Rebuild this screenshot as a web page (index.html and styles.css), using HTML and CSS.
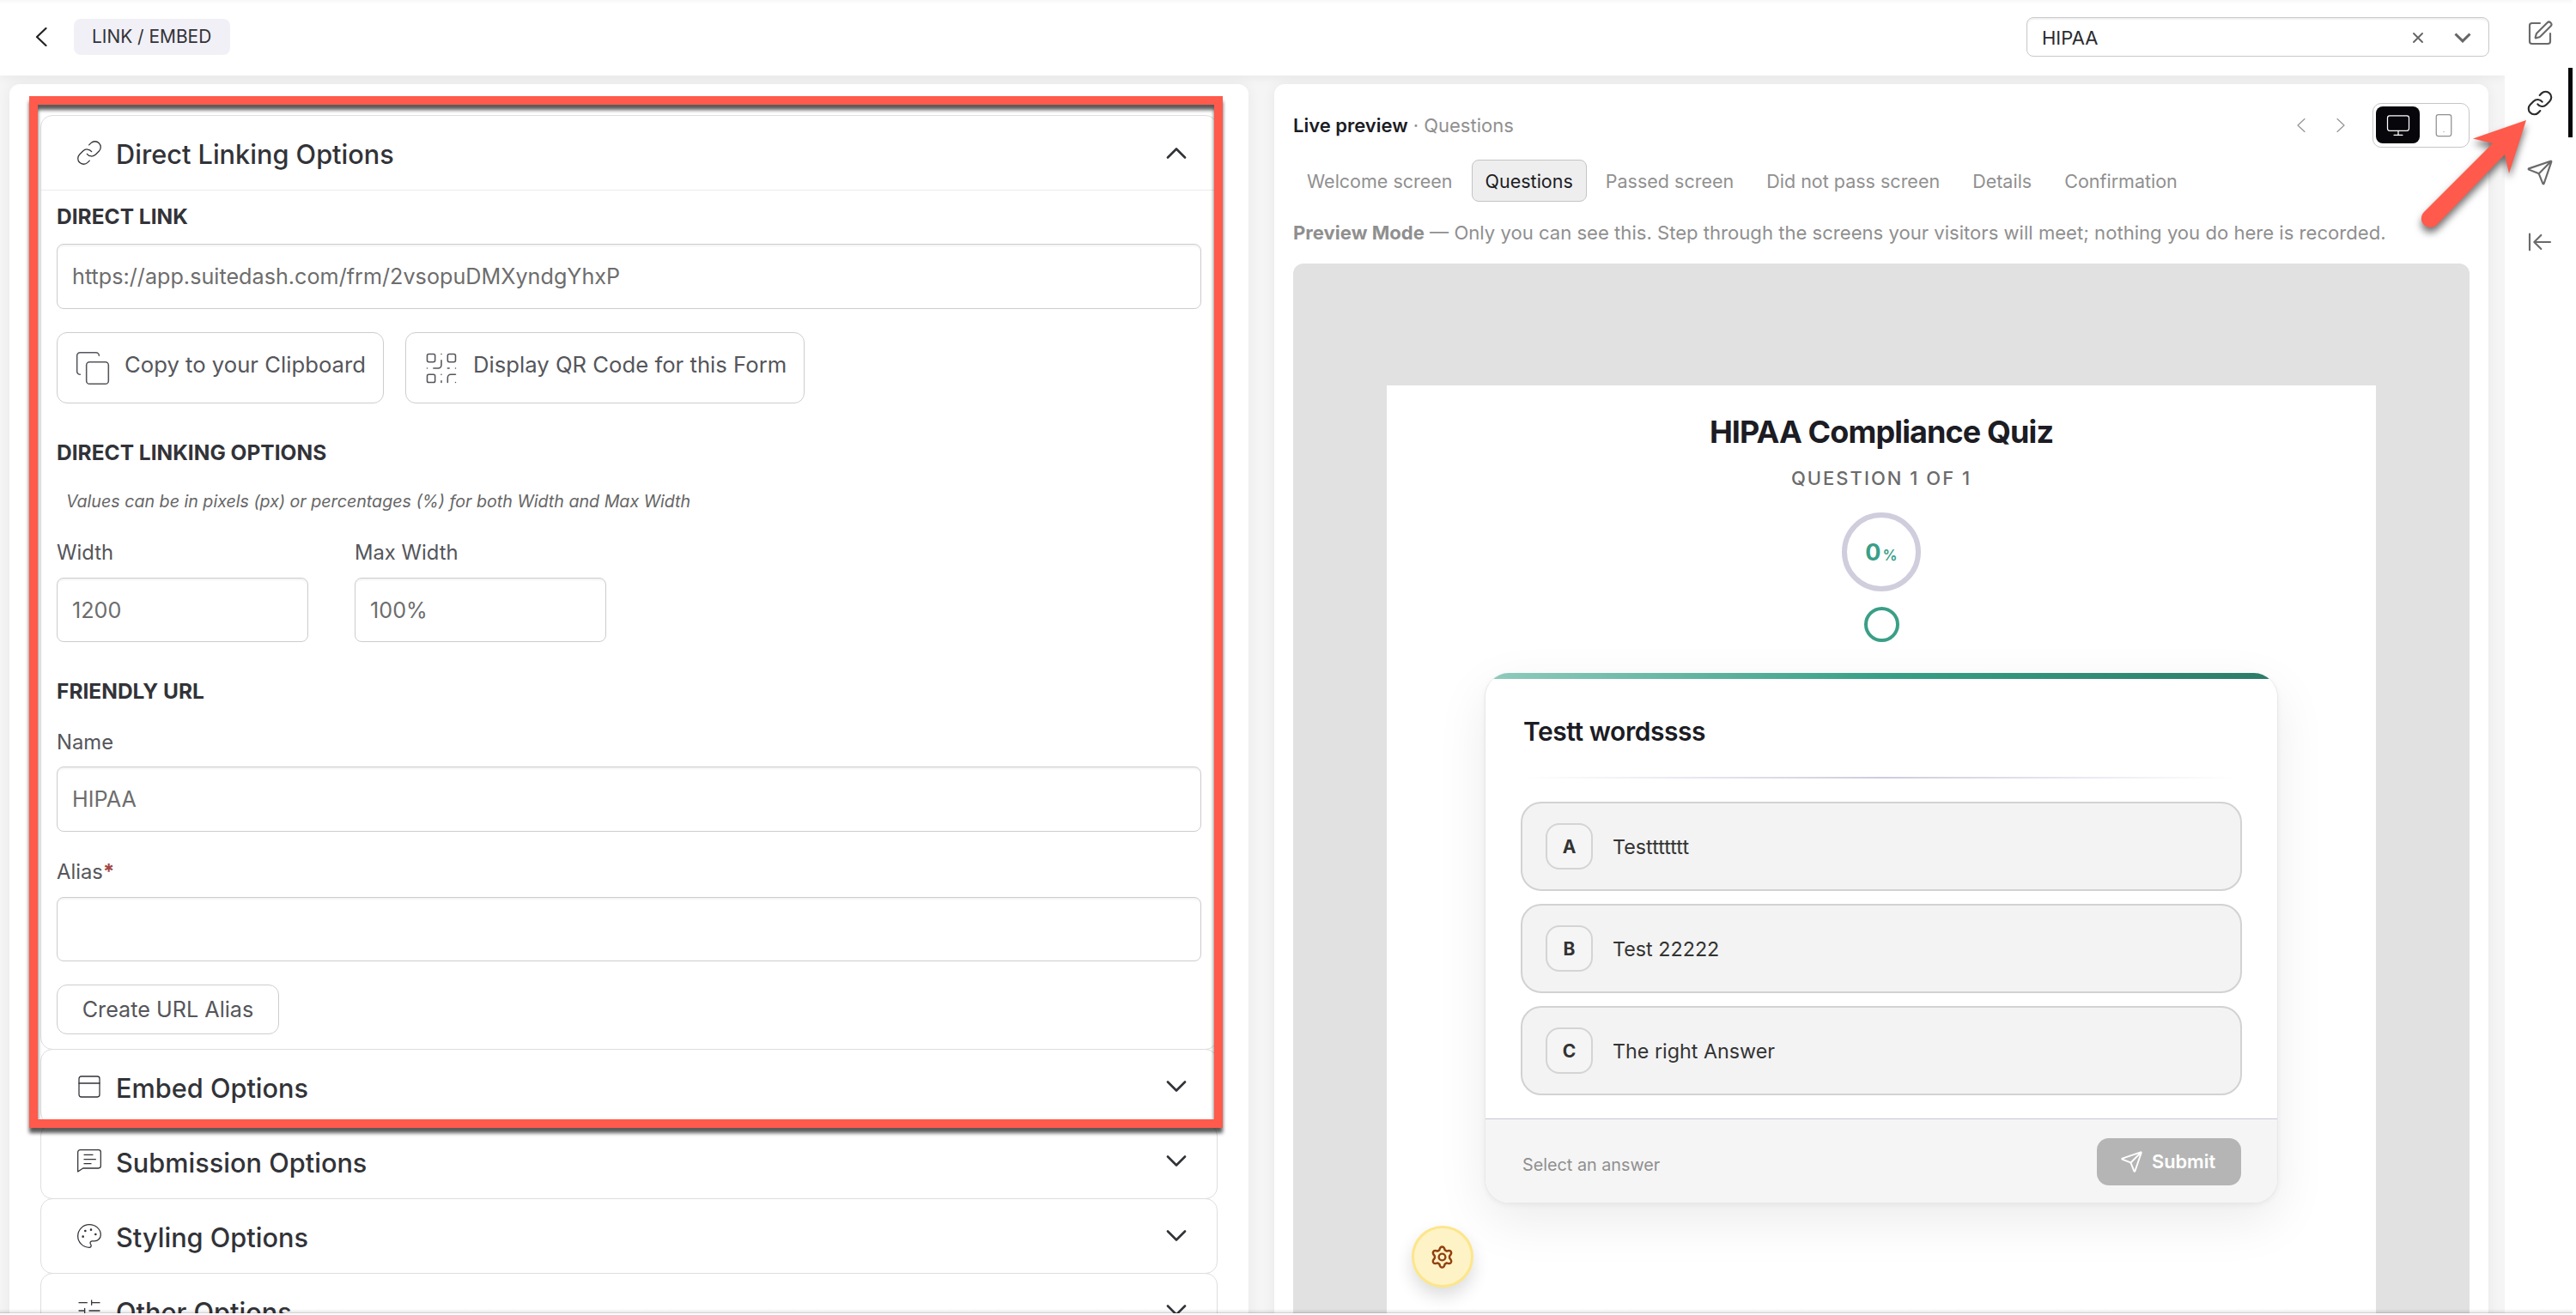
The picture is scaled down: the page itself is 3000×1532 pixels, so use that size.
FILE: index.html
```
<!DOCTYPE html>
<html lang="en">

<head>
    <meta charset="UTF-8">
    <meta name="viewport" content="width=device-width, initial-scale=1.0">
    <title>Link / Embed</title>
    <link rel="stylesheet" href="styles.css">
</head>

<body>
    <div class="app">
        <div class="main">
            <header class="topbar">
                <svg class="back" viewBox="0 0 14 22"><path d="M12.5 1 2 11l10.5 10"/></svg>
                <span class="chip">LINK / EMBED</span>
                <div class="form-select">
                    <span>HIPAA</span>
                    <svg class="clear" viewBox="0 0 12 12"><path d="M1 1l10 10M11 1 1 11"/></svg>
                    <svg class="caret" viewBox="0 0 20 12"><path d="M1.5 1.5 10 9.8l8.5-8.3"/></svg>
                </div>
            </header>

            <div class="panels">
                <section class="panel settings">
                    <div class="item">
                        <div class="item-head open">
                            <svg class="icon" viewBox="0 0 24 24"><path d="M10 13a5 5 0 0 0 7.54.54l3-3a5 5 0 0 0-7.07-7.07l-1.72 1.71"/><path d="M14 11a5 5 0 0 0-7.54-.54l-3 3a5 5 0 0 0 7.07 7.07l1.71-1.71"/></svg>
                            <h2>Direct Linking Options</h2>
                            <svg class="chevron up" viewBox="0 0 24 14"><path d="M2 1.5 12 11.5 22 1.5"/></svg>
                        </div>
                        <div class="item-body">
                            <h3>DIRECT LINK</h3>
                            <div class="input link">https://app.suitedash.com/frm/2vsopuDMXyndgYhxP</div>
                            <div class="buttons">
                                <div class="btn">
                                    <svg viewBox="0 0 24 24"><rect x="8" y="8" width="14" height="14" rx="2"/><path d="M4 16c-1.1 0-2-.9-2-2V4c0-1.1.9-2 2-2h10c1.1 0 2 .9 2 2"/></svg>
                                    <span>Copy to your Clipboard</span>
                                </div>
                                <div class="btn">
                                    <svg viewBox="0 0 24 24"><rect x="3" y="3" width="5" height="5" rx="1"/><rect x="16" y="3" width="5" height="5" rx="1"/><rect x="3" y="16" width="5" height="5" rx="1"/><path d="M21 16h-3a2 2 0 0 0-2 2v3M21 21v.01M12 7v3a2 2 0 0 1-2 2H7M3 12h.01M12 3h.01M12 16v.01M16 12h1M21 12v.01M12 21v-1"/></svg>
                                    <span>Display QR Code for this Form</span>
                                </div>
                            </div>

                            <h3 class="sizes-title">DIRECT LINKING OPTIONS</h3>
                            <p class="hint">Values can be in pixels (px) or percentages (%) for both Width and Max Width</p>
                            <div class="sizes">
                                <div class="field">
                                    <label>Width</label>
                                    <div class="input">1200</div>
                                </div>
                                <div class="field">
                                    <label>Max Width</label>
                                    <div class="input">100%</div>
                                </div>
                            </div>

                            <h3 class="friendly-title">FRIENDLY URL</h3>
                            <label class="name-label">Name</label>
                            <div class="input name">HIPAA</div>
                            <label class="alias-label">Alias<b>*</b></label>
                            <div class="input alias"></div>
                            <div class="btn small"><span>Create URL Alias</span></div>
                        </div>
                    </div>

                    <div class="item">
                        <div class="item-head">
                            <svg class="icon" viewBox="0 0 24 24"><rect x="3" y="3" width="18" height="18" rx="2"/><path d="M3 9h18"/></svg>
                            <h2>Embed Options</h2>
                            <svg class="chevron" viewBox="0 0 24 14"><path d="M2 1.5 12 11.5 22 1.5"/></svg>
                        </div>
                    </div>
                    <div class="item">
                        <div class="item-head">
                            <svg class="icon" viewBox="0 0 24 24"><path d="M22 16a2 2 0 0 1-2 2H6.5L2 21V4a2 2 0 0 1 2-2h16a2 2 0 0 1 2 2zM7.5 6.2H15M7.5 10.3h10M7.5 14h6"/></svg>
                            <h2>Submission Options</h2>
                            <svg class="chevron" viewBox="0 0 24 14"><path d="M2 1.5 12 11.5 22 1.5"/></svg>
                        </div>
                    </div>
                    <div class="item">
                        <div class="item-head">
                            <svg class="icon" viewBox="0 0 24 24"><g class="dots"><circle cx="13.5" cy="6.5" r=".5"/><circle cx="17.5" cy="10.5" r=".5"/><circle cx="8.5" cy="7.5" r=".5"/><circle cx="6.5" cy="12.5" r=".5"/></g><path d="M12 2C6.5 2 2 6.5 2 12s4.5 10 10 10c.926 0 1.648-.746 1.648-1.688 0-.437-.18-.835-.437-1.125-.29-.289-.438-.652-.438-1.125a1.64 1.64 0 0 1 1.668-1.668h1.996c3.051 0 5.555-2.503 5.555-5.554C21.965 6.012 17.461 2 12 2z"/></svg>
                            <h2>Styling Options</h2>
                            <svg class="chevron" viewBox="0 0 24 14"><path d="M2 1.5 12 11.5 22 1.5"/></svg>
                        </div>
                    </div>
                    <div class="item">
                        <div class="item-head">
                            <svg class="icon" viewBox="0 0 24 24"><path d="M10 5H3M12 19H3M14 3v4M16 17v4M21 12h-9M21 19h-5M21 5h-7M8 10v4M8 12H3"/></svg>
                            <h2>Other Options</h2>
                            <svg class="chevron" viewBox="0 0 24 14"><path d="M2 1.5 12 11.5 22 1.5"/></svg>
                        </div>
                    </div>
                </section>

                <section class="panel preview">
                    <div class="preview-head">
                        <strong>Live preview</strong>
                        <span class="crumb">· Questions</span>
                        <svg class="step prev" viewBox="0 0 10 16"><path d="M9 .5 1 8l8 7.5"/></svg>
                        <svg class="step" viewBox="0 0 10 16"><path d="M1 .5 9 8l-8 7.5"/></svg>
                        <div class="devices">
                            <div class="device active"><svg viewBox="0 0 24 24"><rect x="2" y="3" width="20" height="14" rx="2"/><path d="M8 21h8M12 17v4"/></svg></div>
                            <div class="device"><svg viewBox="0 0 24 24"><rect x="5" y="2" width="14" height="20" rx="2"/><path d="M12 18h.01"/></svg></div>
                        </div>
                    </div>
                    <nav class="tabs">
                        <span class="tab">Welcome screen</span>
                        <span class="tab active">Questions</span>
                        <span class="tab">Passed screen</span>
                        <span class="tab">Did not pass screen</span>
                        <span class="tab">Details</span>
                        <span class="tab">Confirmation</span>
                    </nav>
                    <p class="note"><b>Preview Mode</b> — Only you can see this. Step through the screens your visitors will meet; nothing you do here is recorded.</p>

                    <div class="canvas">
                        <div class="frame">
                            <h1>HIPAA Compliance Quiz</h1>
                            <div class="counter">QUESTION 1 OF 1</div>
                            <div class="ring"><b>0</b><small>%</small></div>
                            <div class="dot"></div>

                            <div class="card">
                                <div class="card-bar"></div>
                                <h2>Testt wordssss</h2>
                                <div class="divider"></div>
                                <div class="answers">
                                    <div class="answer"><b>A</b>Testtttttt</div>
                                    <div class="answer"><b>B</b>Test 22222</div>
                                    <div class="answer"><b>C</b>The right Answer</div>
                                </div>
                                <div class="card-foot">
                                    <span>Select an answer</span>
                                    <div class="submit">
                                        <svg viewBox="0 0 24 24"><path d="M14.536 21.686a.5.5 0 0 0 .937-.024l6.5-19a.496.496 0 0 0-.635-.635l-19 6.5a.5.5 0 0 0-.024.937l7.93 3.18a2 2 0 0 1 1.112 1.11zM21.854 2.147l-10.94 10.939"/></svg>
                                        Submit
                                    </div>
                                </div>
                            </div>

                            <div class="fab">
                                <svg viewBox="0 0 24 24"><path d="M9.3 5.3Q10 2 12 2t2.700 3.300l1.700 1q3.300-1.200 4.200.5t-1.500 4.200v2q2.400 2.500 1.500 4.200t-4.200.5l-1.700 1Q14 22 12 22t-2.700-3.300l-1.700-1q-3.300 1.200-4.200-.5t1.500-4.200v-2Q2.500 8.500 3.400 6.800t4.200-.5z"/><circle cx="12" cy="12" r="3.2"/></svg>
                            </div>
                        </div>
                    </div>
                </section>
            </div>
        </div>

        <aside class="rail">
            <div class="rail-item"><svg viewBox="0 0 24 24"><path d="M12 3H5a2 2 0 0 0-2 2v14a2 2 0 0 0 2 2h14a2 2 0 0 0 2-2v-7"/><path d="M18.375 2.625a1 1 0 0 1 3 3l-9.013 9.014a2 2 0 0 1-.853.505l-2.873.84a.5.5 0 0 1-.62-.62l.84-2.873a2 2 0 0 1 .506-.852z"/></svg></div>
            <div class="rail-item active"><svg viewBox="0 0 24 24"><path d="M10 13a5 5 0 0 0 7.54.54l3-3a5 5 0 0 0-7.07-7.07l-1.72 1.71"/><path d="M14 11a5 5 0 0 0-7.54-.54l-3 3a5 5 0 0 0 7.07 7.07l1.71-1.71"/></svg></div>
            <div class="rail-item"><svg viewBox="0 0 24 24"><path d="M14.536 21.686a.5.5 0 0 0 .937-.024l6.5-19a.496.496 0 0 0-.635-.635l-19 6.5a.5.5 0 0 0-.024.937l7.93 3.18a2 2 0 0 1 1.112 1.11zM21.854 2.147l-10.94 10.939"/></svg></div>
            <div class="rail-item"><svg viewBox="0 0 24 24"><path d="M3 19V5M13 6l-6 6 6 6M7 12h14"/></svg></div>
        </aside>

        <div class="highlight"></div>
        <svg class="pointer" viewBox="0 0 130 140"><path d="M125 10 63 31.5l23 5.5-80 80a10.5 10.5 0 0 0 15 15l79-82 5 22z"/></svg>
        <div class="fold"></div>
    </div>
</body>

</html>
```
FILE: styles.css
```
* {
    box-sizing: border-box;
}

body {
    margin: 0;
    font-family: Inter, "Liberation Sans", sans-serif;
    color: #323338;
    background-color: #fff;
}

h1,
h2,
h3,
p {
    margin: 0;
}

svg {
    display: block;
    flex: none;
    fill: none;
    stroke: currentColor;
    stroke-linecap: round;
    stroke-linejoin: round;
}

.app {
    display: flex;
    position: relative;
    width: 2996px;
    height: 1530px;
    overflow: hidden;
    background-color: #f5f5f5;
}

.main {
    display: flex;
    flex-direction: column;
    width: 2917px;
}

/* top bar */
.topbar {
    display: flex;
    flex: none;
    align-items: center;
    height: 88px;
    padding: 0 18px 2px 41px;
    background-color: #fff;
    background-image: linear-gradient(#f8f8f8, #fff 5px);
    box-shadow: 0 2px 12px rgba(0, 0, 0, 0.06);
}

.back {
    width: 14px;
    height: 22px;
    stroke-width: 2.2;
    color: #222;
}

.chip {
    width: 182px;
    height: 42px;
    line-height: 42px;
    margin-left: 31px;
    padding-left: 21px;
    border-radius: 8px;
    background-color: #f1f0f6;
    font-size: 20.9px;
}

.form-select {
    display: flex;
    align-items: center;
    width: 539px;
    height: 46px;
    margin-left: auto;
    padding: 1px 19px 0 17px;
    border: 1px solid #c9c9c9;
    border-radius: 8px;
    box-shadow: inset 0 2px 2px rgba(0, 0, 0, 0.06);
    font-size: 22px;
    color: #2b2b2f;
}

.clear {
    width: 12px;
    height: 12px;
    margin-left: auto;
    stroke-width: 1.9;
    color: #666;
}

.caret {
    width: 20px;
    height: 12px;
    margin: 0 1px 0 36px;
    stroke-width: 3;
    stroke-linecap: butt;
    stroke-linejoin: miter;
    color: #666;
}

/* panels */
.panels {
    display: flex;
    gap: 30px;
    flex: 1;
    padding: 10px 19px 0 11px;
}

.panel {
    height: 1460px;
    border-radius: 12px;
    background-color: #fff;
    box-shadow: 0 0 16px rgba(0, 0, 0, 0.06);
}

.settings {
    width: 1443px;
    padding: 36px 36px 0;
}

.item {
    border: 1px solid #dedede;
    border-radius: 14px;
}

.item + .item {
    margin-top: -1px;
}

.item-head {
    display: flex;
    align-items: center;
    height: 86px;
    padding: 0 35px 0 40px;
}

.item-head.open {
    height: 87px;
    border-bottom: 1px solid #ebebeb;
}

.item-head h2 {
    margin: 3px 0 0 15px;
    font-size: 30.7px;
    font-weight: 500;
}

.icon {
    width: 32px;
    height: 32px;
    stroke-width: 0.95;
}

.icon .dots {
    fill: currentColor;
}

.chevron {
    width: 24px;
    height: 14px;
    margin-left: auto;
    stroke-width: 2.6;
}

.chevron.up {
    margin-bottom: 1px;
    transform: rotate(180deg);
}

.item-body {
    padding: 15px 18px 17px;
}

.item-body h3 {
    font-size: 24.5px;
    line-height: 30px;
    font-weight: 700;
}

label {
    display: block;
    font-size: 23.8px;
    line-height: 30px;
    color: #55565b;
}

label b {
    color: #a34545;
}

.input {
    height: 76px;
    padding: 0 17px;
    border: 1px solid #cdcdcd;
    border-radius: 8px;
    box-shadow: inset 0 2px 2px rgba(0, 0, 0, 0.05);
    font-size: 25.2px;
    line-height: 74px;
    color: #6d6d6d;
}

.input.link {
    margin-top: 17px;
}

.buttons {
    display: flex;
    gap: 25px;
    margin-top: 27px;
}

.btn {
    display: flex;
    align-items: center;
    gap: 15px;
    height: 83px;
    padding: 0 20px 0 19px;
    border: 1px solid #cdcdcd;
    border-radius: 12px;
    font-size: 25.7px;
    color: #55565b;
}

.btn span {
    margin-top: -8px;
}

.btn svg {
    width: 44px;
    height: 44px;
    stroke-width: 0.85;
}

.sizes-title {
    margin-top: 42px;
}

.hint {
    margin: 30px 0 0 11px;
    font-size: 19.65px;
    line-height: 24px;
    font-style: italic;
    color: #666;
}

.sizes {
    display: flex;
    gap: 54px;
    margin-top: 33px;
}

.field {
    width: 293px;
}

.field .input {
    height: 75px;
    margin-top: 14px;
}

.friendly-title {
    margin-top: 42px;
}

.name-label {
    margin-top: 30px;
}

.input.name {
    margin-top: 13px;
}

.alias-label {
    margin-top: 32px;
}

.input.alias {
    height: 75px;
    margin-top: 14px;
}

.btn.small {
    width: 259px;
    height: 58px;
    margin-top: 27px;
    padding: 0;
    justify-content: center;
    font-size: 25.2px;
}

.btn.small span {
    margin-top: 0;
}

/* live preview */
.preview {
    width: 1414px;
    padding: 22px 22px 0;
}

.preview-head {
    display: flex;
    align-items: center;
    height: 52px;
    font-size: 22px;
    color: #909090;
}

.preview-head strong {
    margin-top: -1px;
    font-weight: 600;
    color: #1c1c24;
}

.crumb {
    margin: -1px 0 0 6px;
}

.step {
    width: 10px;
    height: 16px;
    margin-left: 36px;
    stroke-width: 1.1;
}

.step.prev {
    margin-left: auto;
}

.devices {
    display: flex;
    gap: 2px;
    width: 113px;
    height: 52px;
    margin-left: 32px;
    padding: 3px;
    border: 1px solid #c6c6c6;
    border-radius: 10px;
}

.device {
    display: flex;
    align-items: center;
    justify-content: center;
    width: 51px;
    height: 43px;
    border-radius: 8px;
}

.device.active {
    color: #fff;
    background-color: #06060b;
}

.device svg {
    width: 30px;
    height: 30px;
    stroke-width: 1;
}

.tabs {
    display: flex;
    gap: 6px;
    margin-top: 14px;
}

.tab {
    height: 49px;
    padding: 0 15px;
    border: 1px solid transparent;
    border-radius: 8px;
    font-size: 21.5px;
    line-height: 49px;
    color: #909090;
}

.tab.active {
    border-color: #c4c4c4;
    background-color: #eee;
    color: #1c1c24;
}

.note {
    margin-top: 21px;
    font-size: 22.1px;
    line-height: 30px;
    white-space: nowrap;
    color: #8f8f8f;
}

.canvas {
    height: 1260px;
    margin-top: 21px;
    padding: 142px 109px 0;
    border-radius: 12px;
    background-color: #e1e1e1;
}

.frame {
    display: flex;
    flex-direction: column;
    align-items: center;
    position: relative;
    height: 1118px;
    background-color: #fff;
    overflow: hidden;
}

.frame h1 {
    margin-top: 32px;
    font-size: 36px;
    line-height: 44px;
    font-weight: 700;
    letter-spacing: -0.9px;
    color: #1c1c24;
}

.counter {
    margin-top: 17px;
    font-size: 22px;
    line-height: 30px;
    font-weight: 500;
    letter-spacing: 2px;
    color: #6b6b6b;
}

.ring {
    display: flex;
    align-items: baseline;
    justify-content: center;
    gap: 2px;
    width: 92px;
    height: 92px;
    margin-top: 25px;
    border: 6px solid #d0cddd;
    border-radius: 50%;
    line-height: 81px;
    color: #38a088;
}

.ring b {
    font-size: 27px;
}

.ring small {
    font-size: 17px;
    font-weight: 600;
}

.dot {
    width: 41px;
    height: 41px;
    margin-top: 18px;
    border: 4px solid #3a9f86;
    border-radius: 50%;
}

.card {
    width: 924px;
    height: 618px;
    margin-top: 36px;
    border: 1px solid #e8e8e8;
    border-top: 0;
    border-radius: 28px;
    background-color: #fff;
    box-shadow: 0 2px 6px rgba(0, 0, 0, 0.05), 0 20px 60px rgba(0, 0, 0, 0.08);
    overflow: hidden;
}

.card-bar {
    height: 7px;
    background-image: linear-gradient(90deg, #90cbbd, #38a088 50%, #2b7c68);
}

.card h2 {
    margin: 43px 0 0 44px;
    font-size: 30px;
    line-height: 36px;
    font-weight: 600;
    letter-spacing: -0.45px;
    color: #1c1c24;
}

.divider {
    height: 2px;
    margin: 35px 45px 0;
    background-image: linear-gradient(90deg, transparent, #cfcbdd 50%, transparent);
}

.answers {
    display: flex;
    flex-direction: column;
    gap: 15px;
    margin: 27px 41px 0 41px;
}

.answer {
    display: flex;
    align-items: center;
    height: 104px;
    padding-left: 27px;
    border: 2px solid #d2d2d2;
    border-radius: 24px;
    background-color: #f3f3f3;
    font-size: 23.3px;
    color: #333;
}

.answer b {
    width: 55px;
    height: 54px;
    margin-right: 23px;
    border: 2px solid #d4d4d4;
    border-radius: 16px;
    background-color: #f5f5f5;
    font-size: 21px;
    line-height: 51px;
    text-align: center;
}

.card-foot {
    display: flex;
    align-items: center;
    justify-content: space-between;
    height: 99px;
    margin-top: 27px;
    padding: 0 42px 0 43px;
    border-top: 1px solid #c9c6d6;
    background-color: #f5f5f5;
    font-size: 19.8px;
    color: #8f8f8f;
}

.card-foot span {
    margin-top: 8px;
}

.submit {
    display: flex;
    align-items: center;
    gap: 10px;
    width: 168px;
    height: 55px;
    padding-left: 27px;
    border-radius: 14px;
    background-color: #b5b5b5;
    font-size: 21.8px;
    font-weight: 600;
    color: #fff;
}

.submit svg {
    width: 27px;
    height: 27px;
    stroke-width: 1.7;
}

.fab {
    position: absolute;
    left: 29px;
    top: 979px;
    display: flex;
    align-items: center;
    justify-content: center;
    width: 72px;
    height: 72px;
    padding: 0 1px 0 0;
    border: 3px solid #fde68a;
    border-radius: 50%;
    background-color: #fef3c7;
    box-shadow: 0 10px 20px rgba(0, 0, 0, 0.14);
    color: #92400e;
}

.fab svg {
    width: 29px;
    height: 29px;
    stroke-width: 2;
}

/* right rail */
.rail {
    width: 79px;
    padding-top: 1px;
    background-color: #fff;
    background-image: linear-gradient(#f8f8f8, #fff 5px);
}

.rail-item {
    display: flex;
    align-items: center;
    justify-content: center;
    height: 81px;
    padding-left: 8px;
    border-right: 5px solid transparent;
    color: #6a6a6a;
}

.rail-item:first-child {
    height: 78px;
    padding-bottom: 3px;
}

.rail-item.active {
    border-right-color: #06060b;
    color: #2b2b2b;
}

.rail-item svg {
    width: 32px;
    height: 32px;
    stroke-width: 1.6;
}

/* annotations */
.highlight {
    position: absolute;
    left: 34px;
    top: 112px;
    width: 1390px;
    height: 1202px;
    border: 10px solid #ff5a4b;
    filter: drop-shadow(0 6px 2px rgba(0, 0, 0, 0.65));
}

.pointer {
    position: absolute;
    left: 2817px;
    top: 130px;
    width: 130px;
    height: 140px;
    overflow: visible;
    fill: #ff5a4b;
    stroke: none;
    filter: drop-shadow(0 6px 4px rgba(0, 0, 0, 0.55));
}

.fold {
    position: absolute;
    left: 0;
    right: 0;
    bottom: 0;
    height: 5px;
    background-image: linear-gradient(rgba(0, 0, 0, 0), rgba(0, 0, 0, 0.08) 70%, rgba(0, 0, 0, 0.22));
}
```
